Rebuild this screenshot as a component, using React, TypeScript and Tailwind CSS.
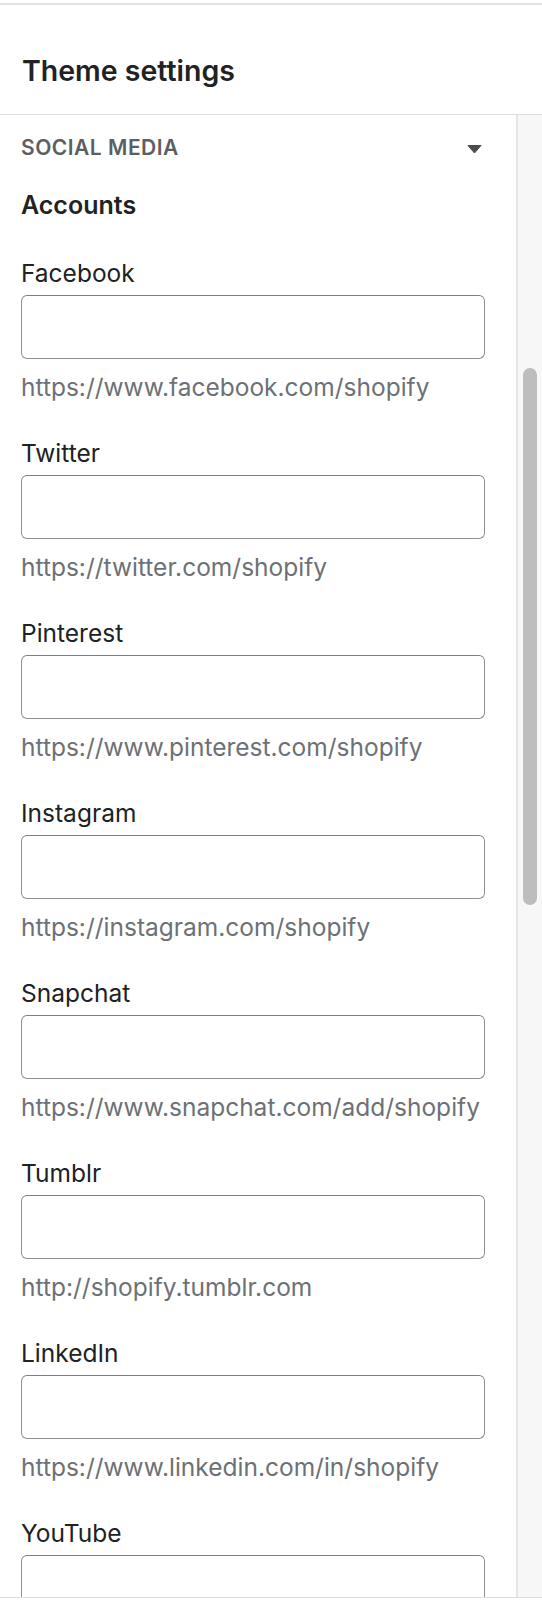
import React from 'react';

const accounts = [
  { label: 'Facebook', hint: 'https://www.facebook.com/shopify' },
  { label: 'Twitter', hint: 'https://twitter.com/shopify' },
  { label: 'Pinterest', hint: 'https://www.pinterest.com/shopify' },
  { label: 'Instagram', hint: 'https://instagram.com/shopify' },
  { label: 'Snapchat', hint: 'https://www.snapchat.com/add/shopify' },
  { label: 'Tumblr', hint: 'http://shopify.tumblr.com' },
  { label: 'LinkedIn', hint: 'https://www.linkedin.com/in/shopify' },
  { label: 'YouTube', hint: '' },
];

const AccountField: React.FC<{ label: string; hint: string }> = ({ label, hint }) => (
  <div className="mb-[34px]">
    <label className="block text-[24.5px] leading-[32px] text-[#202223] mb-[6px]">{label}</label>
    <input
      type="text"
      className="block w-full h-[64px] rounded-[6px] border-[1.5px] border-[#8c9196] border-t-[#7b8085] bg-white outline-none"
    />
    {hint && <p className="mt-[12px] text-[24.5px] leading-[32px] text-[#6d7175]">{hint}</p>}
  </div>
);

export default function App() {
  return (
    <div className="w-[542px] h-[1600px] bg-white overflow-hidden flex flex-col font-['Inter',sans-serif]">
      <div className="h-[3px]" />
      <div className="h-[2px] bg-[#e2e2e2]" />
      <div className="pl-[22px] pt-[48px] pb-[25px] border-b border-[#dcdfe3]">
        <h1 className="text-[28.5px] leading-[36px] font-semibold text-[#202223]">Theme settings</h1>
      </div>
      <div className="flex-1 flex min-h-0">
        <div className="flex-1 min-w-0 overflow-hidden pl-[21px] pr-[31px] pt-[19px]">
          <div className="flex items-center justify-between">
            <span className="text-[21px] leading-[28px] font-semibold uppercase tracking-[0.5px] text-[#5c5f62]">Social media</span>
            <svg width="15" height="10" viewBox="0 0 15 10" className="mr-[3px] mt-[2px]">
              <path d="M1 1.5h13l-6.5 7.5z" fill="#4a4d50" stroke="#4a4d50" strokeLinejoin="round" />
            </svg>
          </div>
          <h2 className="mt-[27px] mb-[36px] text-[25px] leading-[32px] font-semibold text-[#202223]">Accounts</h2>
          {accounts.map((a) => (
            <AccountField key={a.label} label={a.label} hint={a.hint} />
          ))}
        </div>
        <div className="relative w-[26px] border-l-2 border-[#e6e6e6] bg-[#f7f7f7]">
          <div className="absolute left-[5px] top-[253px] w-[14px] h-[537px] rounded-full bg-[#bdbdbd]" />
        </div>
      </div>
      <div className="h-[1px] bg-[#dedede]" />
      <div className="h-[2px] bg-white" />
    </div>
  );
}
